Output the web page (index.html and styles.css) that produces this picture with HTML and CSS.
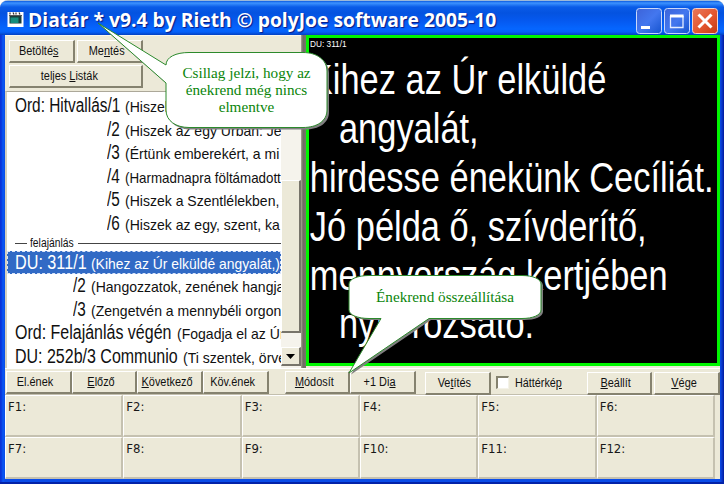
FILE: index.html
```html
<!DOCTYPE html>
<html lang="hu">
<head>
<meta charset="utf-8">
<title>Diatár</title>
<link rel="stylesheet" href="styles.css">
</head>
<body>
<div class="window">
  <header class="titlebar">
    <svg class="app-icon" width="17" height="17" viewBox="0 0 17 17">
      <rect x=".5" y="1" width="16" height="15" fill="#fff"/>
      <path d="M3 1.500v2M6 1.500l1 2M9 1.500v2M12 1.500l1 2" stroke="#333" stroke-width="1.200"/>
      <rect x="2.500" y="5" width="12" height="7.500" fill="#173c39"/>
      <rect x="3.500" y="6.500" width="8" height="5.500" fill="#168d7c"/>
      <path d="M2 4.500h13" stroke="#555" stroke-width="1"/>
    </svg>
    <h1><span>Diatár * v9.4 by Rieth © polyJoe software 2005-10</span></h1>
    <div class="controls">
      <svg width="26" height="26"><rect x=".5" y=".5" width="25" height="25" rx="3" fill="url(#blue)" stroke="#c9d8fb"/><path d="M5 19.500h9" stroke="#fff" stroke-width="3"/>
        <defs>
          <linearGradient id="blue" x1="0" y1="0" x2="1" y2="1"><stop offset="0" stop-color="#3d63d8"/><stop offset=".5" stop-color="#4377ef"/><stop offset="1" stop-color="#1553cf"/></linearGradient>
          <linearGradient id="red" x1="0" y1="0" x2="1" y2="1"><stop offset="0" stop-color="#e8795c"/><stop offset=".55" stop-color="#e4562f"/><stop offset="1" stop-color="#c23a12"/></linearGradient>
        </defs>
      </svg>
      <svg width="26" height="26"><rect x=".5" y=".5" width="25" height="25" rx="3" fill="url(#blue)" stroke="#c9d8fb"/><path d="M6.500 8v11.500h12.500V8" fill="none" stroke="#e4ecff" stroke-width="1.300"/><path d="M6 8h13.600" stroke="#fff" stroke-width="3"/></svg>
      <svg width="26" height="26"><rect x=".5" y=".5" width="25" height="25" rx="3" fill="url(#red)" stroke="#f3d3cc"/><path d="M6.500 6.500l13 13M19.500 6.500l-13 13" stroke="#fff" stroke-width="3"/></svg>
    </div>
  </header>

  <main class="content">
    <section class="left">
      <div class="tools">
        <div class="tool-row"><button><span>Betölté<u>s</u></span></button><button><span>Me<u>n</u>tés</span></button></div>
        <div class="tool-row"><button class="wide"><span>teljes <u>L</u>isták</span></button></div>
      </div>
      <div class="list-box">
        <div class="list">
          <div class="row"><b class="hit">Ord: Hitvallás/1</b><i>(Hiszek az egy</i></div>
          <div class="row sub"><b>/2</b><i>(Hiszek az egy Úrban: Jézus</i></div>
          <div class="row sub"><b>/3</b><i>(Értünk emberekért, a mi</i></div>
          <div class="row sub"><b>/4</b><i class="tight">(Harmadnapra föltámadott</i></div>
          <div class="row sub"><b>/5</b><i>(Hiszek a Szentlélekben,</i></div>
          <div class="row sub"><b>/6</b><i>(Hiszek az egy, szent, ka</i></div>
          <div class="sep"><span>felajánlás</span></div>
          <div class="row sel"><b class="du">DU: 311/1</b><i class="mid">(Kihez az Úr elküldé angyalát,)</i></div>
          <div class="row sub2"><b>/2</b><i>(Hangozzatok, zenének hangja</i></div>
          <div class="row sub2"><b>/3</b><i>(Zengetvén a mennybéli orgon</i></div>
          <div class="row"><b class="fel">Ord: Felajánlás végén</b><i>(Fogadja el az Úr</i></div>
          <div class="row"><b class="com">DU: 252b/3 Communio</b><i>(Ti szentek, örvend</i></div>
        </div>
        <div class="scroll">
          <div class="thumb"></div>
          <div class="gap"></div>
          <div class="down"><svg width="9" height="5"><path d="M0 0h9L4.500 5z"/></svg></div>
        </div>
      </div>
    </section>
    <div class="splitter"></div>
    <section class="screen">
      <div class="ref"><span>DU: 311/1</span></div>
      <p>Kihez az Úr elküldé</p>
      <p class="ind">angyalát,</p>
      <p>hirdesse énekünk Cecíliát.</p>
      <p>Jó példa ő, szívderítő,</p>
      <p>mennyország kertjében</p>
      <p class="ind">nyílt rózsató.</p>
    </section>
  </main>

  <nav class="bar">
    <button><span>El.ének</span></button><button><span><u>E</u>lőző</span></button><button><span><u>K</u>övetkező</span></button><button><span>Köv.ének</span></button>
    <button class="g1"><span><u>M</u>ódosít</span></button><button><span>+1 Di<u>a</u></span></button>
    <button class="g2 low"><span>Ve<u>t</u>ítés</span></button>
    <label><em class="check"></em><span>Háttérké<u>p</u></span></label>
    <button class="low"><span><u>B</u>eállít</span></button><button class="low g3"><span><u>V</u>ége</span></button>
  </nav>

  <section class="keys">
    <div>F1:</div><div>F2:</div><div>F3:</div><div>F4:</div><div>F5:</div><div>F6:</div>
    <div>F7:</div><div>F8:</div><div>F9:</div><div>F10:</div><div>F11:</div><div>F12:</div>
  </section>
</div>

<aside class="balloon star">
  <svg width="234" height="112" viewBox="0 0 234 112">
    <path d="M69 43C69 35 79 30.500 92 30.500H206C220 30.500 230 38 230 49V88C230 99 220 105.500 206 105.500H92C79 105.500 69 99 69 88V61L1 1z" fill="#808080" transform="translate(2 2)"/>
    <path d="M69 43C69 35 79 30.500 92 30.500H206C220 30.500 230 38 230 49V88C230 99 220 105.500 206 105.500H92C79 105.500 69 99 69 88V61L1 1z" fill="#fff" stroke="#2c8a2c"/>
  </svg>
  <p>Csillag jelzi, hogy az<br>énekrend még nincs<br>elmentve</p>
</aside>
<aside class="balloon build">
  <svg width="200" height="102" viewBox="0 0 200 102">
    <path d="M1 9C1 4 10 .500 21 .500H174C185 .500 193 4 193 9V35C193 40 185 43.500 174 43.500H81L1 98L33 43.500H21C10 43.500 1 40 1 35z" fill="#808080" transform="translate(2 1.500)"/>
    <path d="M1 9C1 4 10 .500 21 .500H174C185 .500 193 4 193 9V35C193 40 185 43.500 174 43.500H81L1 98L33 43.500H21C10 43.500 1 40 1 35z" fill="#fff" stroke="#2c8a2c"/>
  </svg>
  <p>Énekrend összeállítása</p>
</aside>
</body>
</html>
```
FILE: styles.css
```css
* { box-sizing: border-box; }
body { margin: 0; width: 725px; height: 486px; overflow: hidden; position: relative; background: #fff; font-family: "Liberation Sans", Arial, sans-serif; }
.window { width: 724px; height: 484px; padding: 1px 4px 4px 5px; background: linear-gradient(90deg, #0a33d8 0, #0a33d8 1px, #0a57f4 3px, #0a4ce8 5px, #0a4ce8 720px, #0a35c8 722px, #001a9c 724px); border-radius: 8px 8px 0 0; border-bottom: 2px solid #0322a8; border-top: 1px solid #9db9d8; }
.titlebar { height: 34px; margin: -1px -4px 0 -5px; padding: 0 6px 0 7px; display: flex; align-items: center; border-radius: 7px 7px 0 0; background: linear-gradient(#0a5ae0 0, #3d93ff 2px, #0a5ce8 6px, #0453e0 12px, #0559f0 20px, #0566ff 28px, #0560f8 31px, #0340c0 34px); }
.app-icon { margin-top: 3px; }
h1 { margin: 4px 0 0 4px; font: 700 19px/28px "Open Sans", "Noto Sans", sans-serif; color: #fff; white-space: nowrap; text-shadow: 1px 1px 1px #0a1883; flex: 1; width: 0; }
h1 span { display: inline-block; transform: scaleX(1.014); transform-origin: 0 0; }
.controls { display: flex; gap: 2px; margin-top: 5px; }
.content { display: flex; height: 333px; background: #ece9d8; }
.left { width: 296px; }
.tools { padding: 4px 0 0 4px; height: 56px; display: flex; flex-direction: column; gap: 2px; border-top: 1px solid #f8f6ee; }
.tool-row { display: flex; gap: 2px; }
button { width: 66px; height: 23px; padding: 0 6px 0 0; border: solid; border-width: 1px 2px 2px 1px; border-color: #fff #85826f #85826f #fff; background: #ece9d8; display: flex; align-items: center; justify-content: center; font: 12px/14px "Liberation Sans", Arial, sans-serif; color: #111; white-space: nowrap; }
button span { display: inline-block; transform: scaleX(.91); }
button.wide { width: 134px; padding-right: 12px; }
.list-box { height: 277px; display: flex; border-top: 1px solid #aca899; border-left: 2px solid #d5d0bd; background: #fff; }
.list { width: 274px; overflow: hidden; padding-top: 2px; color: #101010; }
.row { height: 23.6px; padding-left: 8px; display: flex; align-items: baseline; line-height: 23.6px; white-space: nowrap; }
.row b { font-weight: 400; font-size: 19.500px; transform: scaleX(.785); transform-origin: 0 0; width: 18px; flex: none; }
.row i { font-style: normal; font-size: 15px; transform: scaleX(.935); transform-origin: 0 0; }
.row .tight { transform: scaleX(.89); }
.row .mid { transform: scaleX(.925); }
.row .hit { width: 110px; transform: scaleX(.79); }
.row .du { width: 76px; transform: scaleX(.83); }
.row .fel { width: 162px; transform: scaleX(.82); }
.row .com { width: 168px; transform: scaleX(.82); }
.sub { padding-left: 100px; }
.sub2 { padding-left: 66px; }
.sel { background: #316ac5; color: #fff; outline: 1px dashed #d9e4f8; outline-offset: -1px; }
.sep { height: 15px; padding-left: 8px; display: flex; align-items: center; font-size: 12px; line-height: 14px; }
.sep::before { content: ""; width: 12px; height: 1px; background: #444; }
.sep::after { content: ""; flex: 1; height: 1px; background: #444; }
.sep span { width: 48px; margin-left: 3px; transform: scaleX(.86); transform-origin: 0 0; white-space: nowrap; }
.scroll { width: 20px; background: #f5f3ec; display: flex; flex-direction: column; padding-top: 88px; }
.thumb { height: 153px; background: #ece9d8; border: solid; border-width: 1px 2px 2px 1px; border-color: #fff #77746a #77746a #fff; }
.gap { height: 14px; }
.down { height: 19px; background: #ece9d8; border: solid; border-width: 1px 2px 2px 1px; border-color: #fff #77746a #77746a #fff; display: flex; align-items: center; justify-content: center; }
.splitter { width: 5px; background: linear-gradient(90deg, #aaa796, #6d6b61 2px, #77756a); }
.screen { width: 414px; height: 331px; border: 3px solid #00f500; background: #000; color: #fff; overflow: hidden; }
.ref { height: 18px; padding-left: 1px; font-size: 9.500px; line-height: 12px; }
.ref span { display: inline-block; transform: scaleX(.87); transform-origin: 0 0; }
.screen p { margin: 0; height: 48.900px; padding-left: 1px; font-size: 42.500px; line-height: 48.900px; white-space: nowrap; transform: scaleX(.81); transform-origin: 0 0; }
.screen .ind { padding-left: 37px; }
.bar { display: flex; height: 27px; padding: 2px 0 0 1px; gap: 0; background: #ece9d8; border-top: 1px solid #fff; border-bottom: 1px solid #c3bfae; }
.bar button { flex: none; width: 65.700px; height: 23px; }
.bar .low { margin-top: 1px; }
.bar .g1 { margin-left: 16px; }
.bar .g2 { margin-left: 9px; }
.bar .g3 { margin-left: 2px; }
.bar label { flex: 1; display: flex; align-items: center; padding-left: 5px; font-size: 12px; white-space: nowrap; color: #111; }
.bar label span { transform: scaleX(.9); transform-origin: 0 0; width: 48px; }
.check { width: 13px; height: 13px; margin-right: 6px; background: #fff; border: solid; border-width: 2px 1px 1px 2px; border-color: #85826f #f4f2e8 #f4f2e8 #85826f; }
.keys { height: 84px; padding-right: 5px; display: grid; grid-template-columns: repeat(6, 1fr); grid-template-rows: 42px 42px; background: #ece9d8; }
.keys div { border: solid; border-width: 1px 2px 2px 1px; border-color: #fff #c5c1b0 #c5c1b0 #fff; padding: 3px 0 0 2px; font: 13px/16px "DejaVu Sans Condensed", "DejaVu Sans", sans-serif; color: #181818; }
.balloon { position: absolute; font-family: "Liberation Serif", "Times New Roman", serif; font-size: 15.200px; line-height: 17px; color: #0a850a; text-align: center; }
.balloon svg { display: block; }
.balloon p { position: absolute; margin: 0; white-space: nowrap; }
.star { left: 97px; top: 22px; }
.star p { left: 69px; width: 161px; top: 42px; }
.build { left: 348px; top: 275px; }
.build p { left: 1px; width: 192px; top: 13px; }
```
